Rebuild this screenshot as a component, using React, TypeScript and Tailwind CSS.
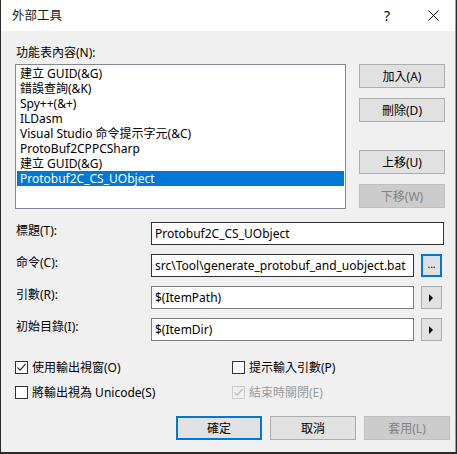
import React from 'react'

const ui = "font-['Noto_Sans','Noto_Sans_CJK_TC',sans-serif] text-[12px] leading-[15px] text-black"

const items = [
  '建立 GUID(&G)',
  '錯誤查詢(&K)',
  'Spy++(&+)',
  'ILDasm',
  'Visual Studio 命令提示字元(&C)',
  'ProtoBuf2CPPCSharp',
  '建立 GUID(&G)',
  'Protobuf2C_CS_UObject',
]

function Btn({ label, disabled, primary, className = '' }: { label: string; disabled?: boolean; primary?: boolean; className?: string }) {
  const base = 'flex items-center justify-center w-[86px] h-[24px]'
  const look = disabled
    ? 'bg-[#cccccc] border border-[#bfbfbf] text-[#838383]'
    : primary
      ? 'bg-[#e1e1e1] border-2 border-[#0078d7]'
      : 'bg-[#e1e1e1] border border-[#adadad]'
  return <div className={`${base} ${look} ${className}`}>{label}</div>
}

function Arrow() {
  return (
    <div className="flex items-center justify-center w-[21px] h-[23px] bg-[#e1e1e1] border border-[#adadad]">
      <svg width="5" height="8" viewBox="0 0 5 8"><path d="M0 0 L4 4 L0 8 Z" fill="#000" /></svg>
    </div>
  )
}

function Check({ checked, disabled }: { checked?: boolean; disabled?: boolean }) {
  return (
    <div className={`w-[13px] h-[13px] border flex items-center justify-center ${disabled ? 'border-[#cccccc] bg-[#f0f0f0]' : 'border-[#333333] bg-white'}`}>
      {checked && (
        <svg width="11" height="11" viewBox="0 0 11 11">
          <path d="M1.5 5.5 L4.2 8.2 L9.5 2" fill="none" stroke={disabled ? '#b8b8b8' : '#333'} strokeWidth="1.2" />
        </svg>
      )}
    </div>
  )
}

function Field({ label, value, dark, narrow, children }: { label: string; value: string; dark?: boolean; narrow?: boolean; children?: React.ReactNode }) {
  return (
    <div className="flex items-start h-[23px]">
      <div className="w-[136px] pt-[1px] pl-[1px]">{label}</div>
      <div className={`h-[23px] ${narrow ? 'w-[263px]' : 'w-[293px]'} bg-white border ${dark ? 'border-[#333333]' : 'border-[#7a7a7a]'} flex items-center pl-[3px] overflow-hidden whitespace-nowrap`}>
        {value}
      </div>
      {children && <div className="ml-[7px]">{children}</div>}
    </div>
  )
}

export default function App() {
  return (
    <div className={`w-[457px] h-[454px] bg-[#2b2b2b] pl-[1px] ${ui}`}>
      <div className="w-[455px] h-[452px] bg-[#f0f0f0] border-r border-[#a0a0a0] flex flex-col">
        {/* title bar */}
        <div className="h-[31px] bg-white flex items-center pl-[11px] shrink-0">
          <span className="text-[12.5px] text-[#1a1a1a]">外部工具</span>
          <span className="ml-auto w-[46px] text-center text-[14px]">?</span>
          <div className="w-[46px] flex justify-center mr-[-1px]">
            <svg width="11" height="11" viewBox="0 0 11 11"><path d="M0.5 0.5 L10.5 10.5 M10.5 0.5 L0.5 10.5" stroke="#000" strokeWidth="1" /></svg>
          </div>
        </div>

        <div className="pl-[14px] flex flex-col">
          <div className="mt-[14px] pl-[1px]">功能表內容(N):</div>

          <div className="flex mt-[4px]">
            <div className="w-[331px] h-[145px] bg-white border border-[#828790] p-[1px]">
              {items.map((it, i) => (
                <div key={i} className={`h-[15px] pl-[3px] whitespace-nowrap ${i === 7 ? 'bg-[#0078d7] text-white' : ''}`}>{it}</div>
              ))}
            </div>
            <div className="ml-[13px] flex flex-col">
              <Btn label="加入(A)" />
              <Btn label="刪除(D)" className="mt-[10px]" />
              <Btn label="上移(U)" className="mt-[28px]" />
              <Btn label="下移(W)" disabled className="mt-[10px]" />
            </div>
          </div>

          <div className="flex flex-col gap-[9px] mt-[13px]">
            <Field label="標題(T):" value="Protobuf2C_CS_UObject" dark />
            <Field label="命令(C):" value="src\Tool\generate_protobuf_and_uobject.bat" dark narrow>
              <div className="flex items-center justify-center w-[21px] h-[23px] bg-[#e1e1e1] border-2 border-[#0078d7] text-[10px] leading-none pb-[3px]">...</div>
            </Field>
            <Field label="引數(R):" value="$(ItemPath)" narrow>
              <Arrow />
            </Field>
            <Field label="初始目錄(I):" value="$(ItemDir)" narrow>
              <Arrow />
            </Field>
          </div>

          <div className="grid grid-cols-[217px_1fr] gap-y-[10px] mt-[19px]">
            <div className="flex items-center gap-[4px]"><Check checked /><span>使用輸出視窗(O)</span></div>
            <div className="flex items-center gap-[4px]"><Check /><span>提示輸入引數(P)</span></div>
            <div className="flex items-center gap-[4px]"><Check /><span>將輸出視為 Unicode(S)</span></div>
            <div className="flex items-center gap-[4px] text-[#9a9a9a]"><Check checked disabled /><span>結束時關閉(E)</span></div>
          </div>

          <div className="flex justify-end gap-[8px] mt-[16px] pr-[5px]">
            <Btn label="確定" primary />
            <Btn label="取消" />
            <Btn label="套用(L)" disabled />
          </div>
        </div>
      </div>
    </div>
  )
}
